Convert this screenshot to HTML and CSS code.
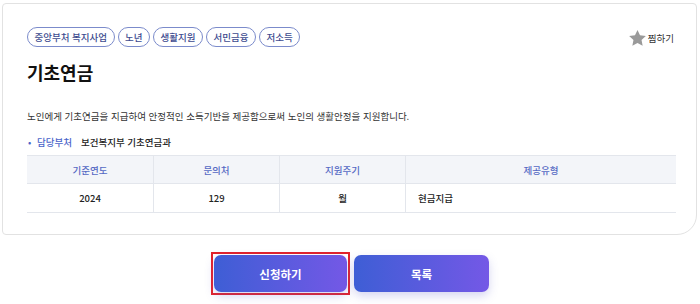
FILE: index.html
```html
<!DOCTYPE html>
<html lang="ko">
    <head>
        <meta charset="utf-8" />
        <meta name="viewport" content="width=device-width" />
        <title>기초연금</title>
        <link rel="stylesheet" href="styles.css">
    </head>
    <body>
        <div class="card">
            <div class="card-top">
                <div class="tags">
                    <span class="tag">중앙부처 복지사업</span>
                    <span class="tag">노년</span>
                    <span class="tag">생활지원</span>
                    <span class="tag">서민금융</span>
                    <span class="tag">저소득</span>
                </div>
                <div class="wish">
                    <svg width="17" height="16" viewBox="0 0 24 23"><path d="M12 0l3.6 7.6 8.4 1-6.2 5.8 1.6 8.3L12 18.6 4.6 22.7l1.6-8.3L0 8.6l8.4-1z" fill="#9a9a9a"/></svg>
                    <span>찜하기</span>
                </div>
            </div>
            <h1 class="title">기초연금</h1>
            <p class="desc">노인에게 기초연금을 지급하여 안정적인 소득기반을 제공함으로써 노인의 생활안정을 지원합니다.</p>
            <div class="dept">
                <span class="dot">•</span>
                <span class="dept-label">담당부처</span>
                <span class="dept-name">보건복지부 기초연금과</span>
            </div>
            <table class="info">
                <thead>
                    <tr>
                        <th class="c1">기준연도</th>
                        <th class="c2">문의처</th>
                        <th class="c3">지원주기</th>
                        <th>제공유형</th>
                    </tr>
                </thead>
                <tbody>
                    <tr>
                        <td>2024</td>
                        <td>129</td>
                        <td>월</td>
                        <td class="left">현금지급</td>
                    </tr>
                </tbody>
            </table>
        </div>
        <div class="actions">
            <span class="focus-ring"><button class="btn">신청하기</button></span>
            <button class="btn wide">목록</button>
        </div>
    </body>
</html>
```

FILE: styles.css
```css
html, body { margin: 0; padding: 0; width: 100%; height: 100%; overflow: hidden }
body {
    background: #fff;
    font-family: "Noto Sans CJK KR", "Noto Sans", sans-serif;
    color: #222;
}

.card {
    margin: 3px 3px 0 2px;
    height: 232px;
    box-sizing: border-box;
    padding: 23px 22px 0 24px;
    border: 1px solid #e2e2e2;
    border-radius: 4px 4px 20px 4px;
}

.card-top {
    display: flex;
    justify-content: space-between;
    align-items: center;
}

.tags {
    display: flex;
    gap: 3px;
}

.tag {
    height: 20px;
    box-sizing: border-box;
    padding: 0 6.5px;
    border: 1px solid #7b8bcb;
    border-radius: 10px;
    font-size: 9.5px;
    line-height: 18px;
    color: #3d4b8f;
    font-weight: 500;
}

.wish {
    display: flex;
    align-items: center;
    gap: 2px;
    font-size: 9.5px;
    color: #333;
    margin-top: 1px;
}

.title {
    margin: 13px 0 0;
    font-size: 18px;
    line-height: 24px;
    font-weight: 700;
    color: #111;
}

.desc {
    margin: 25px 0 0;
    font-size: 9.5px;
    line-height: 14px;
    color: #333;
}

.dept {
    margin-top: 12px;
    display: flex;
    align-items: center;
    font-size: 9.5px;
    line-height: 14px;
}

.dot {
    color: #4a63c9;
    width: 9px;
    margin-left: 1px;
}

.dept-label {
    color: #4a63c9;
    font-weight: 500;
    margin-right: 9px;
}

.dept-name {
    color: #222;
    font-weight: 500;
}

.info {
    margin-top: 6px;
    width: 649px;
    border-collapse: collapse;
    font-size: 9.5px;
}

.info th, .info td {
    border-top: 1px solid #e3e6ec;
    border-bottom: 1px solid #e3e6ec;
    border-left: 1px solid #e3e6ec;
    text-align: center;
    padding: 0;
}

.info th:first-child, .info td:first-child { border-left: none }

.info th {
    height: 27px;
    background: #f3f5f9;
    color: #5569c4;
    font-weight: 500;
}

.info td {
    height: 28px;
    color: #222;
    font-weight: 500;
}

.info .c1 { width: 126px }
.info .c2 { width: 125px }
.info .c3 { width: 125px }

.info td.left {
    text-align: left;
    padding-left: 12px;
}

.actions {
    display: flex;
    justify-content: center;
    align-items: center;
    gap: 4px;
    margin-top: 17px;
}

.focus-ring {
    display: flex;
    padding: 1px;
    border: 2px solid #e3222b;
}

.btn {
    width: 133px;
    height: 37px;
    border: none;
    border-radius: 7px;
    background: linear-gradient(90deg, #3e5ed5, #7458e6);
    color: #fff;
    font-family: inherit;
    font-size: 11.5px;
    font-weight: 700;
    box-shadow: 0 4px 10px rgba(90, 90, 200, 0.25);
    cursor: pointer;
}

.btn.wide { width: 135px }
```
